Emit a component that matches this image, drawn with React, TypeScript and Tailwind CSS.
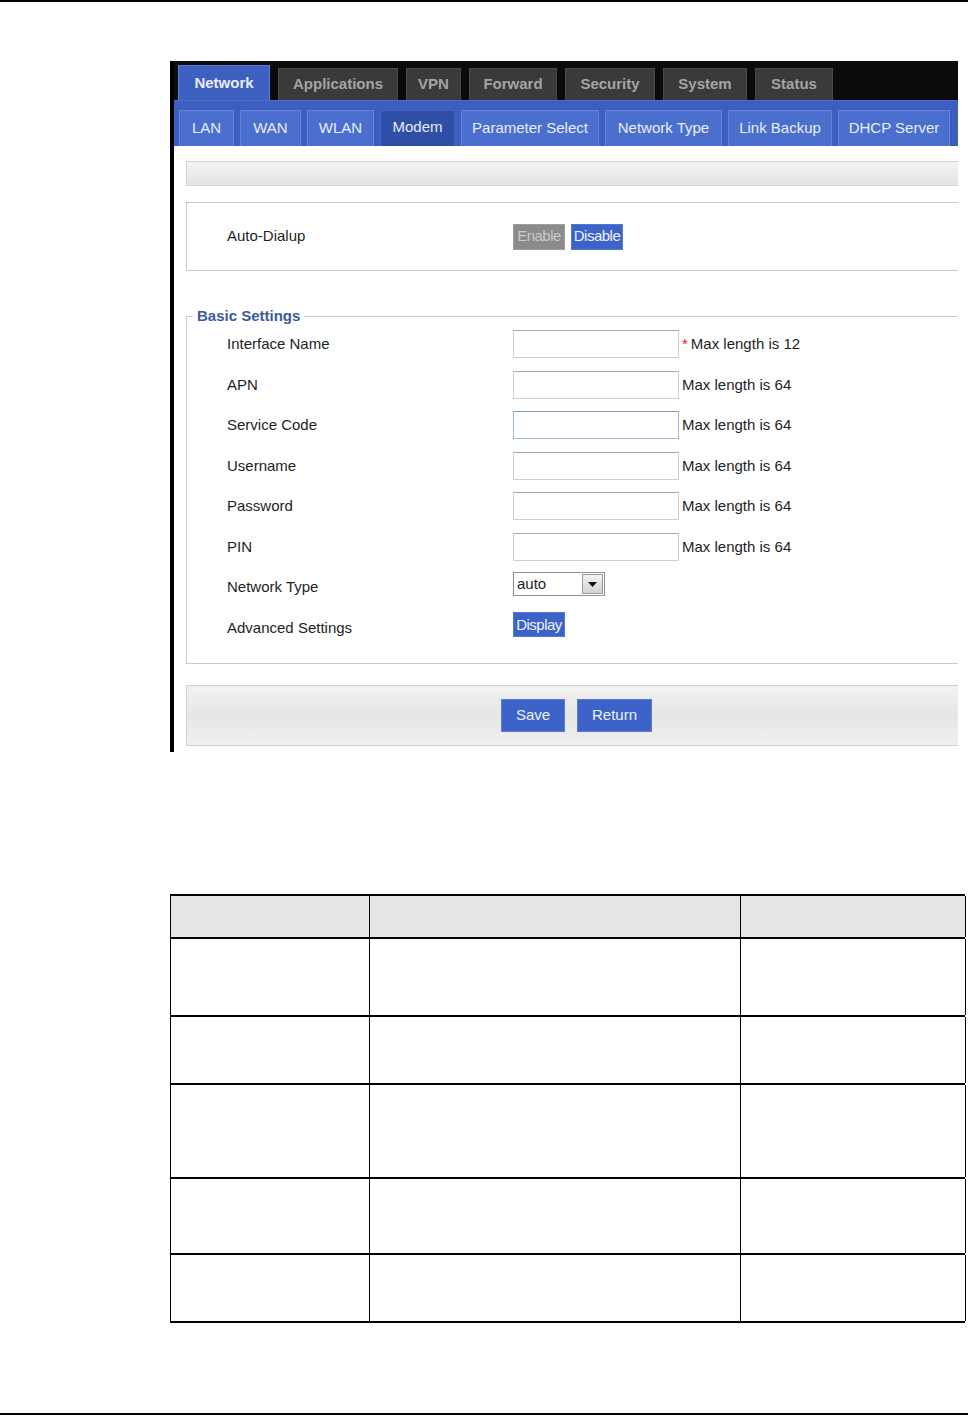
import React from 'react';

const topTabs = [
  { label: 'Network', w: 'w-[92px]', active: true },
  { label: 'Applications', w: 'w-[120px]' },
  { label: 'VPN', w: 'w-[55px]' },
  { label: 'Forward', w: 'w-[88px]' },
  { label: 'Security', w: 'w-[90px]' },
  { label: 'System', w: 'w-[84px]' },
  { label: 'Status', w: 'w-[78px]' },
];

const subTabs = [
  { label: 'LAN', w: 'w-[55px]' },
  { label: 'WAN', w: 'w-[61px]' },
  { label: 'WLAN', w: 'w-[67px]' },
  { label: 'Modem', w: 'w-[75px]', active: true },
  { label: 'Parameter Select', w: 'w-[138px]' },
  { label: 'Network Type', w: 'w-[117px]' },
  { label: 'Link Backup', w: 'w-[104px]' },
  { label: 'DHCP Server', w: 'w-[112px]' },
];

const fields = [
  { label: 'Interface Name', hint: 'Max length is 12', required: true },
  { label: 'APN', hint: 'Max length is 64' },
  { label: 'Service Code', hint: 'Max length is 64', focus: true },
  { label: 'Username', hint: 'Max length is 64' },
  { label: 'Password', hint: 'Max length is 64' },
  { label: 'PIN', hint: 'Max length is 64' },
];

const rowHeights = ['h-[78px]', 'h-[68px]', 'h-[94px]', 'h-[76px]', 'h-[68px]'];

function TextBox({ focus }: { focus?: boolean }) {
  return (
    <div
      className={`w-[166px] h-[28px] bg-white border ${
        focus ? 'border-[#9fb8d4] border-t-[#7f9cc0]' : 'border-[#cfcfcf] border-t-[#a9a9a9]'
      }`}
    />
  );
}

function Row({ label, children }: { label: string; children: React.ReactNode }) {
  return (
    <div className="flex items-center h-[40.5px]">
      <div className="w-[326px] pl-[40px] text-[15px] text-[#1e1e1e]">{label}</div>
      <div className="flex items-center">{children}</div>
    </div>
  );
}

export default function App() {
  return (
    <div className="w-[968px] h-[1416px] bg-white flex flex-col font-['Liberation_Sans',Arial,sans-serif]">
      <div className="h-[2px] bg-black" />

      {/* router screenshot */}
      <div className="mt-[59px] ml-[170px] w-[788px] h-[691px] border-l-4 border-black flex flex-col overflow-hidden">
        <div className="h-[39px] bg-[#0b0b0b] flex items-end pl-[4px] gap-[8px]">
          {topTabs.map((t) =>
            t.active ? (
              <div
                key={t.label}
                className={`${t.w} h-[35px] bg-[#3d5fbf] border-t border-x border-[#5a7bd6] flex items-center justify-center text-[15px] font-bold text-[#e8eefc]`}
              >
                {t.label}
              </div>
            ) : (
              <div
                key={t.label}
                className={`${t.w} h-[32px] bg-[#3a3a3a] border-t border-x border-[#4a4a4a] flex items-center justify-center text-[15px] font-bold text-[#a4a4a4]`}
              >
                {t.label}
              </div>
            )
          )}
        </div>

        <div className="h-[46px] bg-[#3b5ec0] border-t border-[#4d6fd0] flex items-end pl-[5px] gap-[6px]">
          {subTabs.map((t) => (
            <div
              key={t.label}
              className={`${t.w} h-[36px] flex items-center justify-center text-[15px] border-t border-x ${
                t.active
                  ? 'bg-[#2f4ea6] border-[#4566c0] text-[#e6ecfa] pb-[3px]'
                  : 'bg-[#4a6fcf] border-[#6284dc] text-[#e9eefb]'
              }`}
            >
              {t.label}
            </div>
          ))}
        </div>

        <div className="flex-1 bg-white pl-[12px] flex flex-col">
          <div className="mt-[15px] h-[25px] border border-r-0 border-[#d4d4d4] bg-gradient-to-b from-[#f3f3f3] to-[#e3e3e3]" />

          <div className="mt-[16px] h-[69px] border border-r-0 border-[#c9c9c9] flex items-center">
            <div className="w-[326px] pl-[40px] text-[15px] text-[#1e1e1e]">Auto-Dialup</div>
            <div className="flex items-center gap-[6px]">
              <div className="w-[52px] h-[26px] bg-[#8b8b8b] border border-[#9d9d9d] flex items-center justify-center text-[15px] tracking-[-0.5px] text-[#c9c9c9]">
                Enable
              </div>
              <div className="w-[52px] h-[26px] bg-[#3d63c8] border border-[#5478d4] flex items-center justify-center text-[15px] tracking-[-0.5px] text-[#eef2fc]">
                Disable
              </div>
            </div>
          </div>

          <div className="relative mt-[45px] h-[348px] border border-r-0 border-[#cbcbcb] pt-[7px]">
            <div className="absolute -top-[11px] left-[6px] bg-white px-[4px] text-[15px] font-bold text-[#3b5b9e] leading-[20px]">
              Basic Settings
            </div>
            {fields.map((f) => (
              <Row key={f.label} label={f.label}>
                <TextBox focus={f.focus} />
                <span className="ml-[3px] text-[15px] text-[#1e1e1e]">
                  {f.required && <span className="text-[#e02020] mr-[3px]">*</span>}
                  {f.hint}
                </span>
              </Row>
            ))}
            <Row label="Network Type">
              <div className="w-[92px] h-[24px] border border-[#8f8f8f] bg-white flex items-center mb-[6px]">
                <span className="flex-1 pl-[3px] text-[15px] text-[#1e1e1e]">auto</span>
                <div className="w-[21px] h-[20px] mr-[1px] border border-[#9a9a9a] bg-gradient-to-b from-[#f2f2f2] to-[#d2d2d2] flex items-center justify-center">
                  <svg width="9" height="5" viewBox="0 0 9 5">
                    <path d="M0 0h9L4.5 5z" fill="#111" />
                  </svg>
                </div>
              </div>
            </Row>
            <Row label="Advanced Settings">
              <div className="w-[52px] h-[25px] mb-[6px] bg-[#3d63c8] border border-[#5478d4] flex items-center justify-center text-[15px] tracking-[-0.5px] text-[#eef2fc]">
                Display
              </div>
            </Row>
          </div>

          <div className="mt-[21px] h-[61px] border border-r-0 border-[#d0d0d0] bg-gradient-to-b from-[#f2f2f2] via-[#e6e6e6] to-[#f0f0f0] flex items-center justify-center gap-[12px] pl-[8px]">
            <div className="w-[64px] h-[33px] bg-[#3d63c8] border border-[#5a7cd6] flex items-center justify-center text-[15px] text-[#eef2fc]">
              Save
            </div>
            <div className="w-[75px] h-[33px] bg-[#3d63c8] border border-[#5a7cd6] flex items-center justify-center text-[15px] text-[#eef2fc]">
              Return
            </div>
          </div>
        </div>
      </div>

      {/* parameter table */}
      <div className="mt-[142px] ml-[170px] w-[795px] border-t-2 border-l border-black">
        <div className="grid grid-cols-[199px_371px_225px] h-[43px] bg-[#e5e5e5] border-b-2 border-black">
          <div className="border-r border-black" />
          <div className="border-r border-black" />
          <div className="border-r border-black" />
        </div>
        {rowHeights.map((h, i) => (
          <div key={i} className={`grid grid-cols-[199px_371px_225px] ${h} border-b-2 border-black`}>
            <div className="border-r border-black" />
            <div className="border-r border-black" />
            <div className="border-r border-black" />
          </div>
        ))}
      </div>

      <div className="mt-auto mb-[1px] h-[2px] bg-black" />
    </div>
  );
}
